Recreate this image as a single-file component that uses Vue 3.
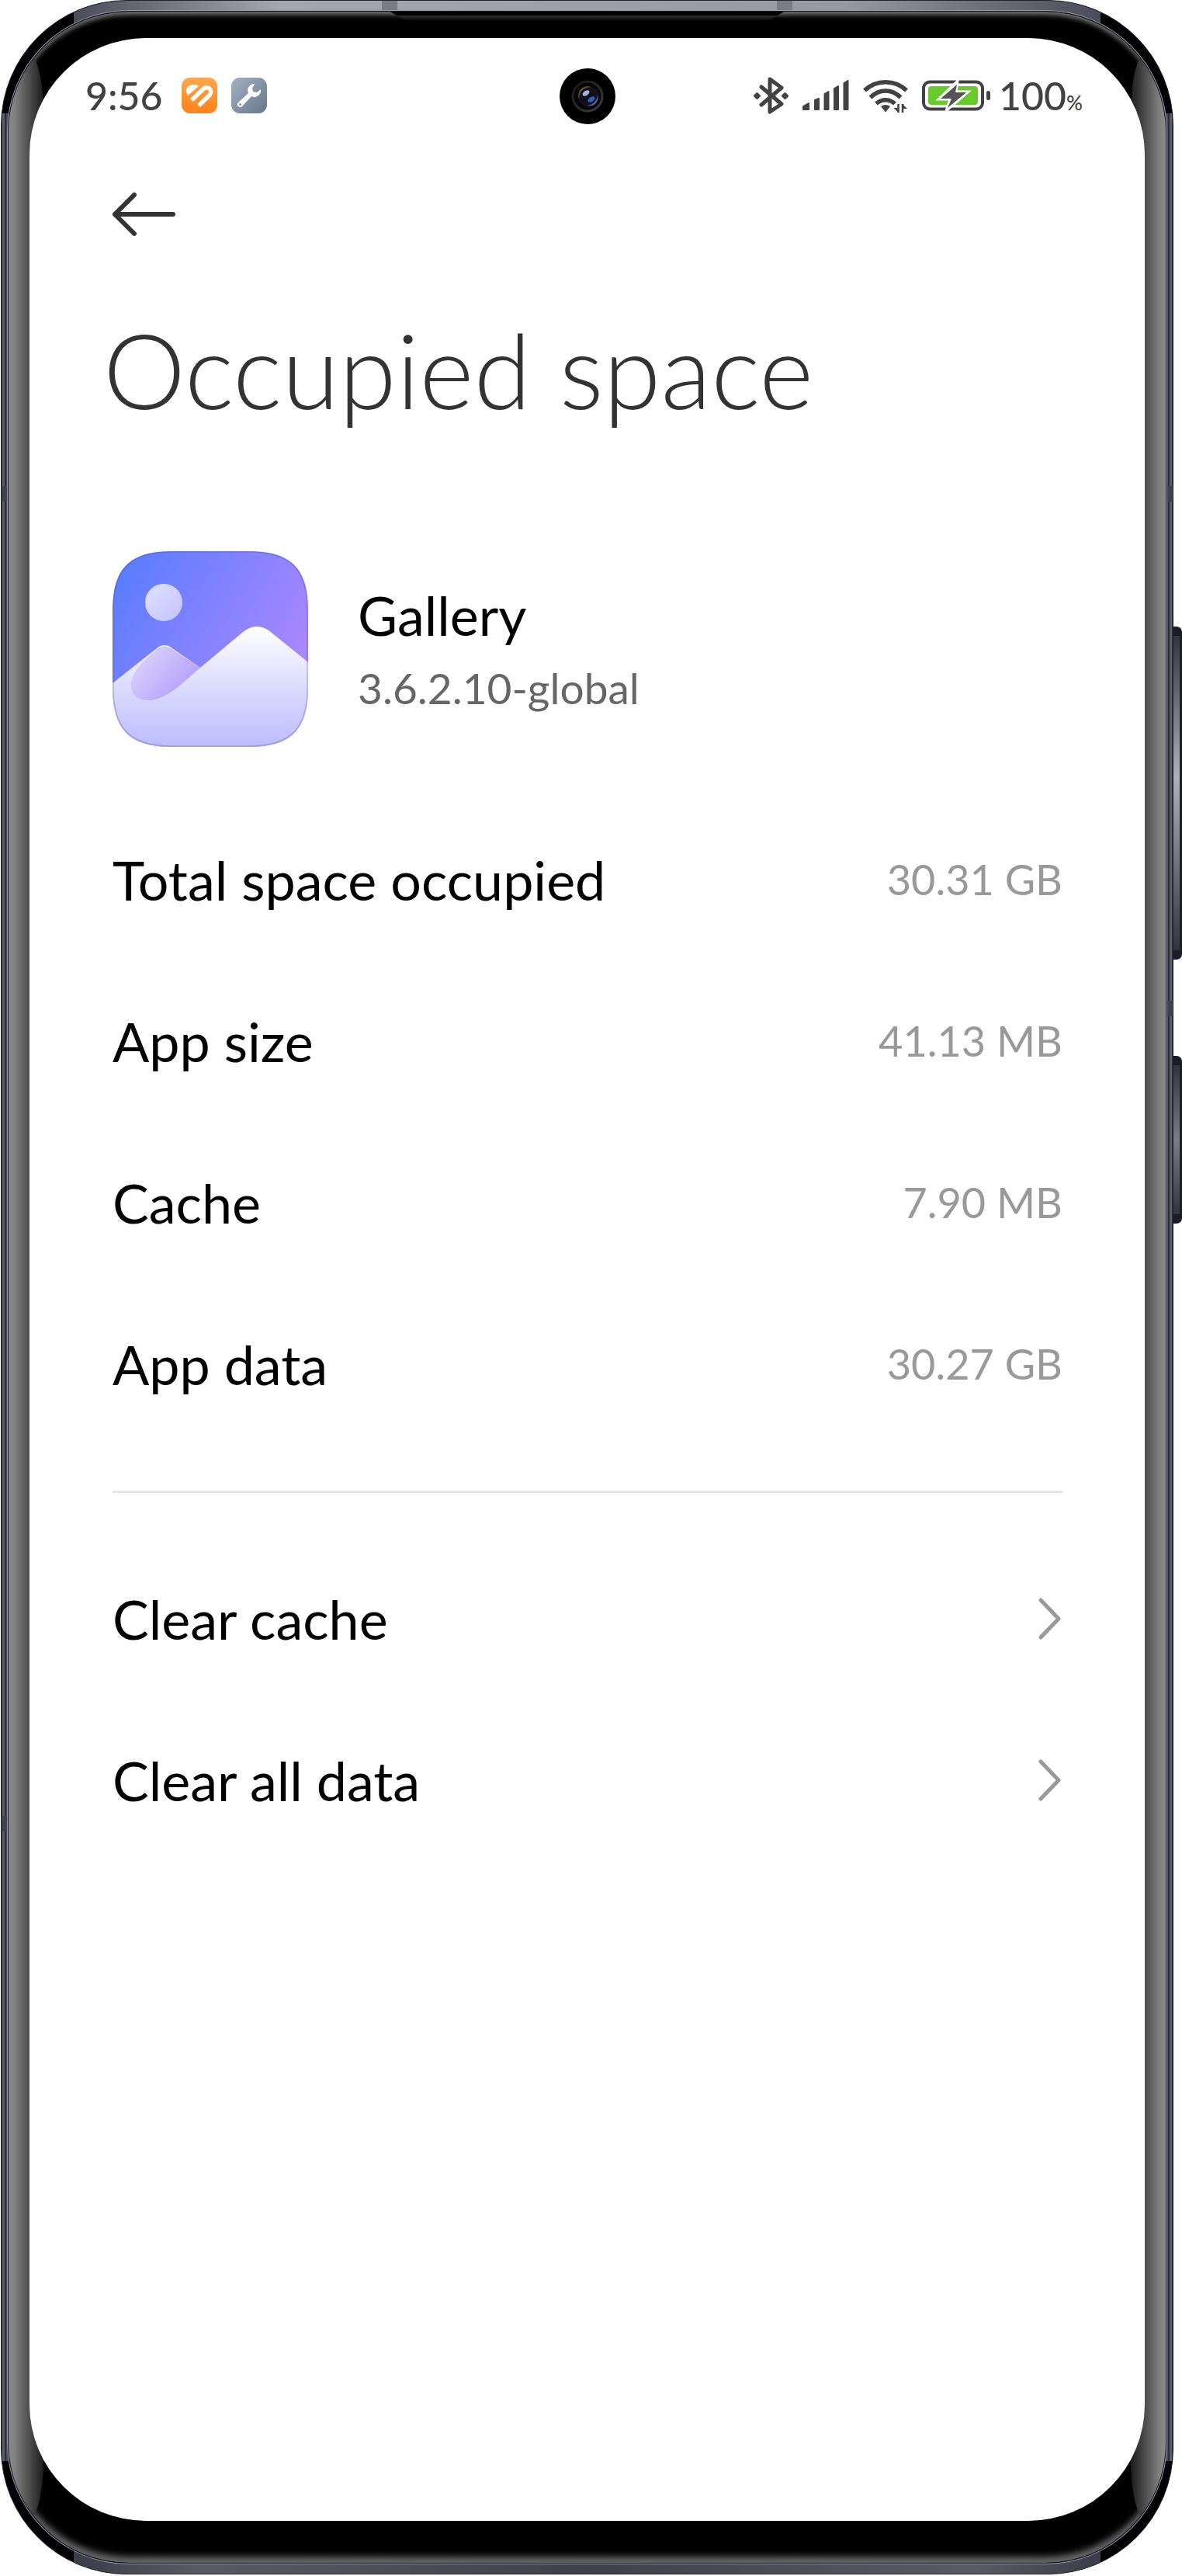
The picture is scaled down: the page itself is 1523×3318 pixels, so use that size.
<script setup>
const usage = [
  { label: 'Total space occupied', value: '30.31 GB' },
  { label: 'App size', value: '41.13 MB' },
  { label: 'Cache', value: '7.90 MB' },
  { label: 'App data', value: '30.27 GB' },
]
const actions = ['Clear cache', 'Clear all data']
</script>

<template>
  <div class="stage">
    <span class="key volume"></span>
    <span class="key power"></span>
    <div class="device">
      <span class="seam side left high"></span>
      <span class="seam side left low"></span>
      <span class="seam side right high"></span>
      <span class="seam side right mid"></span>
      <span class="seam top first"></span>
      <span class="seam top last"></span>
      <div class="bezel">
        <span class="glare glare-left"></span>
        <span class="glare glare-right"></span>
        <span class="earpiece"></span>
        <main class="screen">
          <svg class="camera" viewBox="0 0 72 72" aria-hidden="true">
            <defs>
              <linearGradient id="ring" x1="0" y1="0" x2="1" y2="1">
                <stop offset="0" stop-color="#151515" />
                <stop offset="1" stop-color="#3c3c3c" />
              </linearGradient>
              <linearGradient id="lens" x1="0" y1="0" x2="1" y2="1">
                <stop offset="0" stop-color="#b98a76" />
                <stop offset="0.35" stop-color="#151018" />
                <stop offset="0.7" stop-color="#101426" />
                <stop offset="1" stop-color="#b9cdea" />
              </linearGradient>
            </defs>
            <circle cx="36" cy="36" r="36" fill="#000" />
            <circle cx="36" cy="36" r="19" fill="#060606" stroke="url(#ring)" stroke-width="3" />
            <circle cx="37" cy="36" r="12" fill="#110f18" stroke="url(#lens)" stroke-width="2" />
            <ellipse cx="34" cy="32" rx="5" ry="3" fill="#9db4dc" transform="rotate(-35 34 32)" />
            <ellipse cx="41" cy="40" rx="5" ry="3" fill="#2c5fc4" transform="rotate(-35 41 40)" />
          </svg>

          <header class="status">
            <div class="status-group">
              <span class="time">9:56</span>
              <svg class="badge" viewBox="0 0 46 46" aria-hidden="true">
                <defs>
                  <linearGradient id="orange" x1="0" y1="0" x2="0" y2="1">
                    <stop offset="0" stop-color="#ffa64f" />
                    <stop offset="1" stop-color="#ff8316" />
                  </linearGradient>
                </defs>
                <rect width="46" height="46" rx="11" fill="url(#orange)" />
                <path d="M8 23 22 11C17 7 6 9 6 17c0 2 1 4 2 6z" fill="#fff" />
                <path d="M13 29 28 14.500c6-5 13 2 8 8L22 36" fill="none" stroke="#fff" stroke-width="5.500" />
              </svg>
              <svg class="badge" viewBox="0 0 46 46" aria-hidden="true">
                <defs>
                  <linearGradient id="slate" x1="0" y1="0" x2="1" y2="1">
                    <stop offset="0" stop-color="#a3b1c2" />
                    <stop offset="1" stop-color="#67778b" />
                  </linearGradient>
                </defs>
                <rect width="46" height="46" rx="11" fill="url(#slate)" />
                <path d="M30 8c-7 0-11 7-8 12L9 32a3.500 3.500 0 0 0 5 5l12-13c6 3 13-2 12-9l-5 4-5-1-1-4z" fill="#fff" />
                <circle cx="11.500" cy="34.500" r="1.500" fill="#8493a6" />
              </svg>
            </div>
            <div class="status-group signals">
              <svg class="bluetooth" viewBox="0 0 45 48" aria-hidden="true">
                <path d="M10 13 36 35 21 45V3L36 14 10 36" fill="none" stroke="#424242" stroke-width="5" stroke-linecap="round" stroke-linejoin="round" />
                <path d="m4.500 21.500 3 3-3 3-3-3zM40.500 21.500l3 3-3 3-3-3z" fill="#424242" stroke="#424242" stroke-width="3" stroke-linejoin="round" />
              </svg>
              <svg class="bars" viewBox="0 0 60 40" aria-hidden="true">
                <path d="M1 38v-4l7-4v8zM16 38V26l5-2v14zM28.500 38V18l5-3v23zM41 38V11l5-3v30zM53.500 38V4l5-3v37z" fill="#424242" stroke="#424242" stroke-width="2" stroke-linejoin="round" />
              </svg>
              <svg class="wifi" viewBox="0 0 58 44" aria-hidden="true">
                <g fill="none" stroke="#424242" stroke-width="5.500">
                  <path d="M2 15.500C17 1 41 1 56 15.500" />
                  <path d="M9.500 24.500C21 13 37 13 48.500 24.500" />
                  <path d="M17 32.500C24 26 34 26 41 32.500" />
                </g>
                <path d="M23 36q6-4 12 0l-6 7.500z" fill="#424242" />
                <path d="M45.500 33v11M51 44V33" stroke="#424242" stroke-width="2.500" />
                <path d="m39.500 38 6 6V38zM57 39l-6-6v6z" fill="#424242" />
              </svg>
              <svg class="battery" viewBox="0 0 89 40" aria-hidden="true">
                <rect x="2" y="2.500" width="76" height="35" rx="8" fill="none" stroke="#424242" stroke-width="4" />
                <rect x="8" y="8" width="64" height="24" rx="4" fill="#67cb2b" />
                <rect x="83" y="14" width="5" height="12" rx="2.500" fill="#424242" />
                <path d="M46 1 21 25H36L31 40 60 15H44z" fill="#fff" stroke="#fff" stroke-width="3" />
                <path d="M45 6 24 24H38L33 36 57 16H43z" fill="#555" />
              </svg>
              <span class="level">100<small>%</small></span>
            </div>
          </header>

          <div class="content">
            <button class="back" type="button" aria-label="Back">
              <svg viewBox="0 0 84 60" aria-hidden="true">
                <path d="M78 30H3M28 5 3 30l25 25" fill="none" stroke="#333" stroke-width="6" stroke-linecap="round" stroke-linejoin="round" />
              </svg>
            </button>
            <h1>Occupied space</h1>

            <section class="app">
              <svg class="app-icon" viewBox="0 0 252 252" aria-hidden="true">
                <defs>
                  <linearGradient id="sky" x1="0" y1="0.050" x2="1" y2="0.650">
                    <stop offset="0" stop-color="#567cff" />
                    <stop offset="0.500" stop-color="#8482ff" />
                    <stop offset="1" stop-color="#b088ff" />
                  </linearGradient>
                  <linearGradient id="sun" x1="0" y1="0" x2="1" y2="1">
                    <stop offset="0" stop-color="#dfe2ff" />
                    <stop offset="1" stop-color="#c3c2ff" />
                  </linearGradient>
                  <linearGradient id="snow" x1="0" y1="97" x2="0" y2="252" gradientUnits="userSpaceOnUse">
                    <stop offset="0" stop-color="#fff" />
                    <stop offset="0.500" stop-color="#dcdcff" />
                    <stop offset="1" stop-color="#bbbcff" />
                  </linearGradient>
                  <linearGradient id="shade" x1="0.100" y1="0.200" x2="0.800" y2="0.700">
                    <stop offset="0" stop-color="#d9d2fd" />
                    <stop offset="1" stop-color="#b8a4fb" />
                  </linearGradient>
                  <clipPath id="tile"><path d="M0 76C0 22 22 0 76 0h100c54 0 76 22 76 76v100c0 54-22 76-76 76H76C22 252 0 230 0 176z" /></clipPath>
                </defs>
                <g clip-path="url(#tile)">
                  <path d="M0 0h252v252H0z" fill="url(#sky)" />
                  <circle cx="66" cy="66" r="24" fill="url(#sun)" />
                  <path d="M0 170 57 125q10-8 20 0l36 25 54-45q19-16 38 0l47 38v109H0z" fill="url(#snow)" />
                  <path d="M57 126q10-7 20 0l36 24-24 21C76 182 56 196 38 191 24 188 20 172 27 160 34 145 46 136 57 126z" fill="url(#shade)" />
                </g>
                <path d="M1 76C1 23 23 1 76 1h100c53 0 75 22 75 75v100c0 53-22 75-75 75H76C23 251 1 229 1 176z" fill="none" stroke="#4a4f9c" stroke-opacity="0.300" stroke-width="1.500" />
              </svg>
              <div class="app-text">
                <h2>Gallery</h2>
                <p>3.6.2.10-global</p>
              </div>
            </section>

            <dl class="usage">
              <div v-for="item in usage" :key="item.label" class="row">
                <dt>{{ item.label }}</dt>
                <dd>{{ item.value }}</dd>
              </div>
            </dl>
            <hr />
            <button v-for="action in actions" :key="action" class="row action" type="button">
              <span>{{ action }}</span>
              <svg viewBox="0 0 34 56" aria-hidden="true">
                <path d="m6 4 23 24L6 52" fill="none" stroke="#999" stroke-width="5" stroke-linecap="round" stroke-linejoin="round" />
              </svg>
            </button>
          </div>
        </main>
      </div>
    </div>
  </div>
</template>

<style>
body {
  margin: 0;
  background: #fff;
}
</style>

<style scoped>
.stage {
  position: relative;
  display: flex;
  box-sizing: border-box;
  min-height: 100vh;
  padding: 0 11px 2px 1px;
  font-family: Lato, "Noto Sans", sans-serif;
}
.key {
  position: absolute;
  right: 0;
  box-sizing: border-box;
  width: 12px;
  border: 1px solid #1c1c28;
  border-width: 12px 3px 12px 1px;
  border-radius: 0 7px 7px 0;
}
.volume {
  top: 807px;
  height: 429px;
  background: linear-gradient(#343440, #b0b0bd 45%, #343440);
}
.power {
  top: 1360px;
  height: 216px;
  background: linear-gradient(#343440, #7c7c88 50%, #343440);
}
.device {
  position: relative;
  display: flex;
  flex: 1;
  box-sizing: border-box;
  padding: 14px 9px;
  border: 1px solid #23232f;
  border-radius: 162px;
  background:
    linear-gradient(90deg, #4c4c58, #a6a6b3 20%, #9898a5 75%, #4c4c58) center top / calc(100% - 186px) 40px no-repeat,
    linear-gradient(90deg, #3c3c48, #5a5a66 12%, #40404c 50%, #5a5a66 88%, #3c3c48) center bottom / calc(100% - 186px) 40px no-repeat,
    linear-gradient(90deg, #2c2c3a 1px, #5c5c69 1px 4px, #2c2c3a 4px 6px, #4a4a57 6px) left center / 10px calc(100% - 290px) no-repeat,
    linear-gradient(270deg, #2c2c3a 1px, #5c5c69 1px 4px, #2c2c3a 4px 6px, #4a4a57 6px) right center / 10px calc(100% - 290px) no-repeat,
    #020204;
}
.seam {
  position: absolute;
  background: #40404e;
}
.side {
  width: 9px;
  height: 20px;
}
.left {
  left: 0;
}
.right {
  right: 0;
}
.high {
  top: 625px;
}
.mid {
  top: 1288px;
}
.low {
  top: 2338px;
}
.top {
  top: 0;
  width: 20px;
  height: 14px;
  background: #7b7b88;
}
.first {
  left: 490px;
}
.last {
  right: 490px;
}
.bezel {
  position: relative;
  display: flex;
  flex: 1;
  box-sizing: border-box;
  padding: 34px 27px 54px;
  overflow: hidden;
  border-radius: 155px;
  background: #000;
  box-shadow: 0 0 0 1px #15151f, 0 0 0 2px #9a9aa8;
}
.bezel::before {
  content: "";
  position: absolute;
  inset: 0;
  border-radius: 155px;
  box-shadow: inset 0 5px 6px -1px #777, inset 0 -9px 8px -1px #666;
}
.glare {
  position: absolute;
  top: 50px;
  bottom: 52px;
  width: 45px;
}
.glare-left {
  left: 0;
  border-radius: 0 22px 22px 0 / 0 80px 80px 0;
  background: linear-gradient(90deg, #8b8b8b, #808080 8px, #4c4c4c 27px, #1c1c1c);
}
.glare-right {
  right: 0;
  border-radius: 22px 0 0 22px / 80px 0 0 80px;
  background: linear-gradient(270deg, #8b8b8b, #808080 8px, #4c4c4c 27px, #1c1c1c);
}
.earpiece {
  position: absolute;
  top: 0;
  right: 33%;
  left: 33%;
  height: 12px;
  background: linear-gradient(#000 4px, #2e2e2e 6px, #000);
  clip-path: polygon(0 0, 100% 0, 96% 100%, 4% 100%);
}
.screen {
  position: relative;
  display: flex;
  flex: 1;
  flex-direction: column;
  border-radius: 150px;
  background: #fff;
}
.camera {
  position: absolute;
  top: 39px;
  left: 50%;
  width: 72px;
  height: 72px;
  margin-left: -36px;
}
.status {
  display: flex;
  align-items: center;
  justify-content: space-between;
  height: 46px;
  padding: 51px 83px 0 72px;
  color: #424242;
}
.status-group {
  display: flex;
  align-items: center;
  gap: 18px;
}
.time {
  margin-right: 6px;
  font-size: 50px;
  font-weight: 500;
  line-height: 46px;
}
.badge {
  width: 46px;
  height: 46px;
}
.bluetooth {
  width: 45px;
  height: 48px;
}
.bars {
  width: 60px;
  height: 40px;
}
.wifi {
  width: 58px;
  height: 44px;
}
.battery {
  width: 89px;
  height: 40px;
}
.level {
  display: flex;
  align-items: baseline;
  margin-left: -8px;
  font-size: 50px;
  font-weight: 500;
  line-height: 46px;
}
.level small {
  font-size: 26px;
  line-height: 26px;
}
.signals {
  margin-right: -3px;
}
.content {
  display: flex;
  flex-direction: column;
  padding: 90px 106px 0 107px;
}
button {
  margin: 0;
  border: 0;
  background: none;
  font: inherit;
  text-align: left;
  cursor: pointer;
}
.back {
  display: flex;
  align-items: center;
  align-self: flex-start;
  height: 80px;
  padding: 0;
}
.back svg {
  width: 84px;
  height: 60px;
}
h1 {
  margin: 80px 0 0 -12px;
  color: #333;
  font-size: 134px;
  font-weight: 300;
  line-height: 160px;
}
.app {
  display: flex;
  align-items: center;
  gap: 64px;
  margin-top: 154px;
}
.app-icon {
  width: 252px;
  height: 252px;
}
.app-text {
  padding-top: 6px;
  line-height: 94px;
}
h2 {
  margin: 0;
  color: #000;
  font-size: 70px;
  font-weight: 400;
}
p {
  margin: 0;
  color: #666;
  font-size: 55px;
}
.usage {
  margin: 67px 0 0;
}
.row {
  display: flex;
  align-items: center;
  justify-content: space-between;
  height: 208px;
  padding: 0;
  color: #000;
  font-size: 70px;
  line-height: 80px;
}
dd {
  margin: 0;
  color: #999;
  font-size: 54px;
}
hr {
  align-self: stretch;
  height: 3px;
  margin: 59px 0 58px;
  border: 0;
  background: #e6e6e6;
}
.action svg {
  width: 34px;
  height: 56px;
}
</style>
